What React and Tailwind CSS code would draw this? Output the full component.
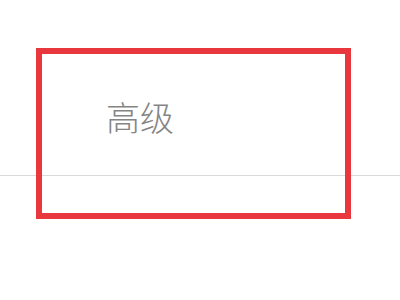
export default function App() {
  return (
    <div className="relative w-[400px] h-[300px] bg-white overflow-hidden" style={{ fontFamily: '"Noto Sans CJK SC", "Noto Sans", sans-serif' }}>
      {/* Tab bar */}
      <div className="h-[176px] border-b border-[#d9d9d9] flex items-start">
        <div className="pl-[106px] pt-[97px] text-[34px] leading-[40px] font-light text-[#858585]">高级</div>
      </div>
      {/* Highlight frame */}
      <div className="absolute left-[36px] top-[48px] w-[315px] h-[171px] border-[6px] border-[#e8383d]" />
    </div>
  );
}
